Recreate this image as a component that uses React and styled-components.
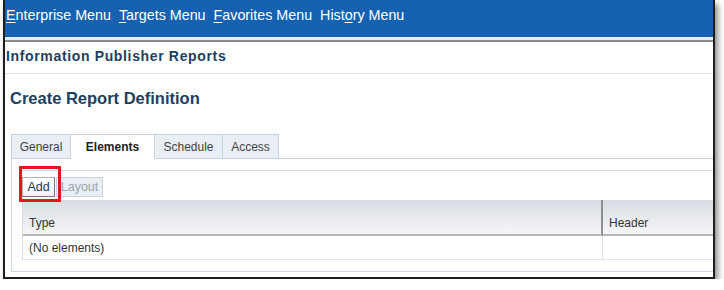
import React from 'react';
import styled, { createGlobalStyle } from 'styled-components';

const Global = createGlobalStyle`
  html, body { margin: 0; padding: 0; background: #fff; }
  body { font-family: "Liberation Sans", Arial, sans-serif; }
`;

const Frame = styled.div`
  box-sizing: border-box;
  width: 712px;
  margin-left: 3px;
  border: 2px solid #1e1e1e;
  border-top: none;
  box-shadow: 3px 4px 6px rgba(0, 0, 0, 0.45);
  overflow: hidden;
  padding-bottom: 5px;
  background: #fff;
`;

const MenuBar = styled.nav`
  box-sizing: border-box;
  height: 40px;
  background: #1662b0;
  border-bottom: 3px solid #e4edf7;
  display: flex;
  align-items: flex-start;
  gap: 8px;
  padding: 7px 0 0 1px;
`;

const MenuItem = styled.span`
  color: #fff;
  font-size: 14.3px;
  line-height: 17px;
  white-space: nowrap;
`;

const Key = styled.u`
  text-decoration: underline;
  text-underline-offset: 2px;
`;

const Header = styled.header`
  border-top: 2px solid #8a8a8a;
`;

const SiteTitle = styled.div`
  padding: 6px 0 8px 1px;
  font-size: 14px;
  font-weight: bold;
  line-height: 17px;
  letter-spacing: 0.65px;
  color: #1d3f5f;
  border-bottom: 1px solid #dbe3ec;
`;

const Heading = styled.h1`
  margin: 0;
  padding: 14px 0 0 5px;
  font-size: 16.5px;
  line-height: 20px;
  font-weight: bold;
  color: #1d3f5f;
`;

const TabRow = styled.div`
  display: flex;
  align-items: flex-end;
  margin: 26px 0 0 6px;
  position: relative;
  z-index: 1;
`;

const Tab = styled.div`
  box-sizing: border-box;
  width: ${p => p.$w}px;
  height: 25px;
  margin-bottom: -1px;
  padding-top: 5px;
  text-align: center;
  font-size: 12px;
  line-height: 14px;
  border-top: 1px solid #c5d2df;
  border-right: 1px solid #c5d2df;
  border-left: ${p => (p.$first ? '1px solid #c5d2df' : 'none')};
  border-bottom: 1px solid ${p => (p.$active ? '#fff' : '#c5d2df')};
  background: ${p => (p.$active ? '#fff' : '#e8eef4')};
  color: ${p => (p.$active ? '#222' : '#444')};
  font-weight: ${p => (p.$active ? 'bold' : 'normal')};
`;

const Panel = styled.section`
  margin-left: 6px;
  border-top: 1px solid #c5d2df;
  border-left: 1px solid #cbd6e2;
  border-bottom: 1px solid #cbd6e2;
  padding: 11px 0 11px 10px;
`;

const Workspace = styled.div`
  border-top: 1px solid #d3dce6;
`;

const Toolbar = styled.div`
  display: flex;
  gap: 1px;
  padding-top: 6px;
  margin-bottom: 3px;
`;

const AddWrap = styled.div`
  position: relative;
`;

const Button = styled.button`
  box-sizing: border-box;
  width: ${p => p.$w}px;
  height: 20px;
  padding: 0;
  font-family: "Liberation Sans", Arial, sans-serif;
  font-size: 12.5px;
  line-height: 14px;
  border: 1px solid ${p => (p.$disabled ? '#c8d3de' : '#a9b4c0')};
  border-right-color: ${p => (p.$disabled ? '#c8d3de' : '#6f7780')};
  border-bottom-color: ${p => (p.$disabled ? '#c8d3de' : '#6f7780')};
  background: ${p => (p.$disabled ? '#e8eef4' : 'linear-gradient(#ffffff, #eef2f6)')};
  color: ${p => (p.$disabled ? '#9ba5ae' : '#1d3b57')};
`;

const Highlight = styled.span`
  position: absolute;
  left: -3px;
  top: -11px;
  width: 42px;
  height: 36px;
  box-sizing: border-box;
  border: 3px solid #e3161f;
  pointer-events: none;
`;

const Table = styled.table`
  width: 720px;
  table-layout: fixed;
  border-collapse: separate;
  border-spacing: 0;
  border-left: 1px solid #dcdcdc;
  font-size: 12px;
  line-height: 14px;
  color: #333;
`;

const Th = styled.th`
  box-sizing: border-box;
  height: 36px;
  padding: 0 6px 4px;
  text-align: left;
  vertical-align: bottom;
  font-weight: normal;
  background: linear-gradient(#d7dce2, #f5f6f8);
  border-bottom: 2px solid #b3b7bc;
  border-right: ${p => (p.$divider ? '2px solid #8e8e8e' : 'none')};
`;

const Td = styled.td`
  box-sizing: border-box;
  height: 24px;
  padding: 0 6px;
  vertical-align: middle;
  border-bottom: 1px solid #e4e4e4;
  border-right: ${p => (p.$divider ? '1px solid #e2e2e2' : 'none')};
`;

export default function App() {
  return (
    <>
      <Global />
      <Frame>
        <MenuBar>
          <MenuItem><Key>E</Key>nterprise Menu</MenuItem>
          <MenuItem><Key>T</Key>argets Menu</MenuItem>
          <MenuItem><Key>F</Key>avorites Menu</MenuItem>
          <MenuItem>Hist<Key>o</Key>ry Menu</MenuItem>
        </MenuBar>
        <Header>
          <SiteTitle>Information Publisher Reports</SiteTitle>
          <Heading>Create Report Definition</Heading>
        </Header>
        <TabRow>
          <Tab $w={60} $first>General</Tab>
          <Tab $w={84} $active>Elements</Tab>
          <Tab $w={68}>Schedule</Tab>
          <Tab $w={56}>Access</Tab>
        </TabRow>
        <Panel>
          <Workspace>
            <Toolbar>
              <AddWrap>
                <Button $w={33}>Add</Button>
                <Highlight />
              </AddWrap>
              <Button $w={47} $disabled>Layout</Button>
            </Toolbar>
            <Table>
              <colgroup>
                <col style={{ width: 580 }} />
                <col />
              </colgroup>
              <thead>
                <tr>
                  <Th $divider>Type</Th>
                  <Th>Header</Th>
                </tr>
              </thead>
              <tbody>
                <tr>
                  <Td $divider>(No elements)</Td>
                  <Td></Td>
                </tr>
              </tbody>
            </Table>
          </Workspace>
        </Panel>
      </Frame>
    </>
  );
}
